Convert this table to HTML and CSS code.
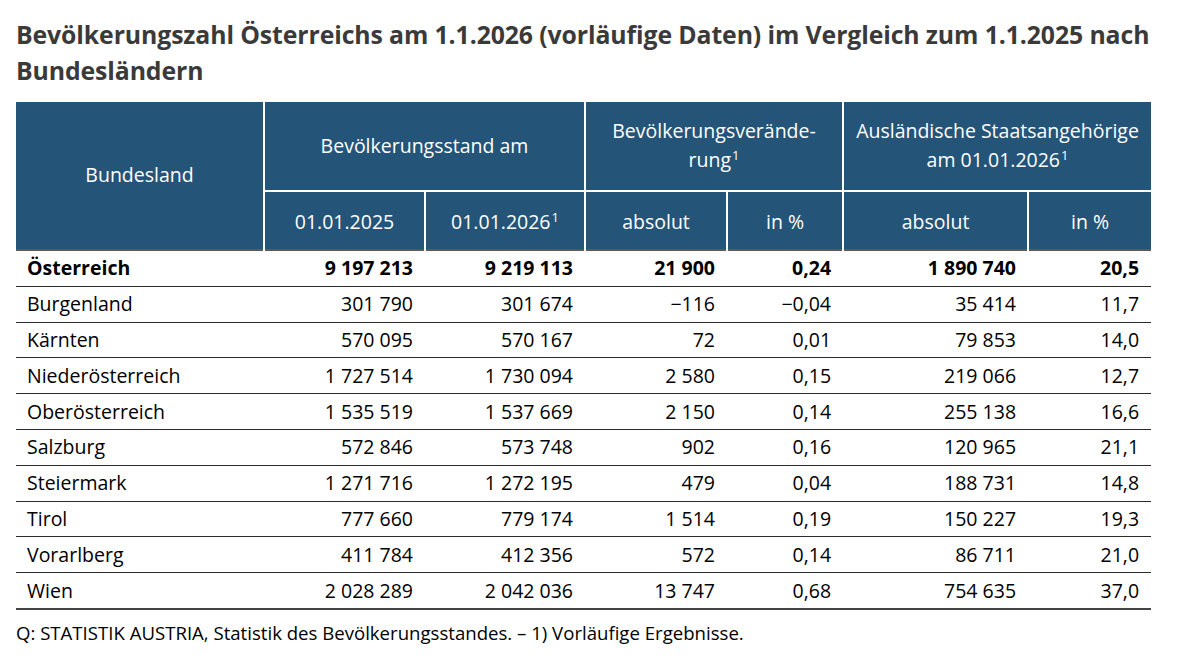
FILE: index.html
```html
<!DOCTYPE html>
<html lang="de">
<head>
<meta charset="utf-8">
<title>Bevölkerungszahl Österreichs</title>
<link rel="stylesheet" href="styles.css">
</head>
<body>
<main class="page">
  <h1 class="title">Bevölkerungszahl Österreichs am 1.1.2026 (vorläufige Daten) im Vergleich zum 1.1.2025 nach Bundesländern</h1>
  <table class="data">
    <colgroup>
      <col class="c-land">
      <col class="c-a">
      <col class="c-b">
      <col class="c-c">
      <col class="c-d">
      <col class="c-e">
      <col class="c-f">
    </colgroup>
    <thead>
      <tr class="h1">
        <th rowspan="2" class="first">Bundesland</th>
        <th colspan="2">Bevölkerungsstand am</th>
        <th colspan="2">Bevölkerungsverände-<br>rung<sup>1</sup></th>
        <th colspan="2" class="last">Ausländische Staatsangehörige<br>am 01.01.2026<sup>1</sup></th>
      </tr>
      <tr class="h2">
        <th>01.01.2025</th>
        <th>01.01.2026<sup>1</sup></th>
        <th>absolut</th>
        <th>in %</th>
        <th>absolut</th>
        <th class="last">in %</th>
      </tr>
    </thead>
    <tbody>
      <tr class="total"><td>Österreich</td><td>9 197 213</td><td>9 219 113</td><td>21 900</td><td>0,24</td><td>1 890 740</td><td>20,5</td></tr>
      <tr><td>Burgenland</td><td>301 790</td><td>301 674</td><td>−116</td><td>−0,04</td><td>35 414</td><td>11,7</td></tr>
      <tr><td>Kärnten</td><td>570 095</td><td>570 167</td><td>72</td><td>0,01</td><td>79 853</td><td>14,0</td></tr>
      <tr><td>Niederösterreich</td><td>1 727 514</td><td>1 730 094</td><td>2 580</td><td>0,15</td><td>219 066</td><td>12,7</td></tr>
      <tr><td>Oberösterreich</td><td>1 535 519</td><td>1 537 669</td><td>2 150</td><td>0,14</td><td>255 138</td><td>16,6</td></tr>
      <tr><td>Salzburg</td><td>572 846</td><td>573 748</td><td>902</td><td>0,16</td><td>120 965</td><td>21,1</td></tr>
      <tr><td>Steiermark</td><td>1 271 716</td><td>1 272 195</td><td>479</td><td>0,04</td><td>188 731</td><td>14,8</td></tr>
      <tr><td>Tirol</td><td>777 660</td><td>779 174</td><td>1 514</td><td>0,19</td><td>150 227</td><td>19,3</td></tr>
      <tr><td>Vorarlberg</td><td>411 784</td><td>412 356</td><td>572</td><td>0,14</td><td>86 711</td><td>21,0</td></tr>
      <tr class="lastrow"><td>Wien</td><td>2 028 289</td><td>2 042 036</td><td>13 747</td><td>0,68</td><td>754 635</td><td>37,0</td></tr>
    </tbody>
  </table>
  <p class="note">Q: STATISTIK AUSTRIA, Statistik des Bevölkerungsstandes. – 1) Vorläufige Ergebnisse.</p>
</main>
</body>
</html>
```

FILE: styles.css
```css
html, body {
  margin: 0;
  padding: 0;
  background: #ffffff;
}

.page {
  padding: 16px 0 0 16px;
  width: 1135px;
  font-family: "Open Sans", "Noto Sans", sans-serif;
  color: #000;
}

.title {
  margin: 0 0 14px 0;
  font-size: 24.8px;
  line-height: 36px;
  font-weight: 700;
  color: #3a3a3a;
  letter-spacing: -0.1px;
}

.data {
  width: 1135px;
  border-collapse: collapse;
  table-layout: fixed;
  font-size: 19.5px;
}

.c-land { width: 248px; }
.c-a { width: 161px; }
.c-b { width: 160px; }
.c-c { width: 142px; }
.c-d { width: 116px; }
.c-e { width: 185px; }
.c-f { width: 123px; }

.data th {
  background: #245478;
  color: #fff;
  font-weight: 400;
  text-align: center;
  padding: 0 4px;
  border-left: 2px solid #fff;
  border-top: 2px solid #fff;
  line-height: 29px;
  white-space: nowrap;
}

.data th.first {
  border-left: none;
  border-top: none;
}

.data th sup {
  font-size: 13px;
  vertical-align: 7px;
  line-height: 0;
  margin-left: 1px;
}

.h1 th { height: 86px; padding-top: 0; padding-bottom: 2px; }
.h2 th { height: 56px; padding-top: 1px; }

.data thead tr.h1 th { border-top: none; }

.data tbody td {
  text-align: right;
  padding: 0 12px 0 8px;
  height: 34.8px;
  line-height: 24px;
  border-bottom: 1px solid #2b2b2b;
  white-space: nowrap;
}

.data tbody td:first-child {
  text-align: left;
  padding-left: 11px;
}

.data tbody tr:first-child td {
  border-top: 2px solid #5a5a5a;
}

.data tr.total td {
  font-weight: 700;
}

.data tr.lastrow td {
  border-bottom: 2px solid #444;
}

.note {
  margin: 10px 0 0 0;
  font-size: 18.6px;
  line-height: 26px;
  color: #000;
}
```
